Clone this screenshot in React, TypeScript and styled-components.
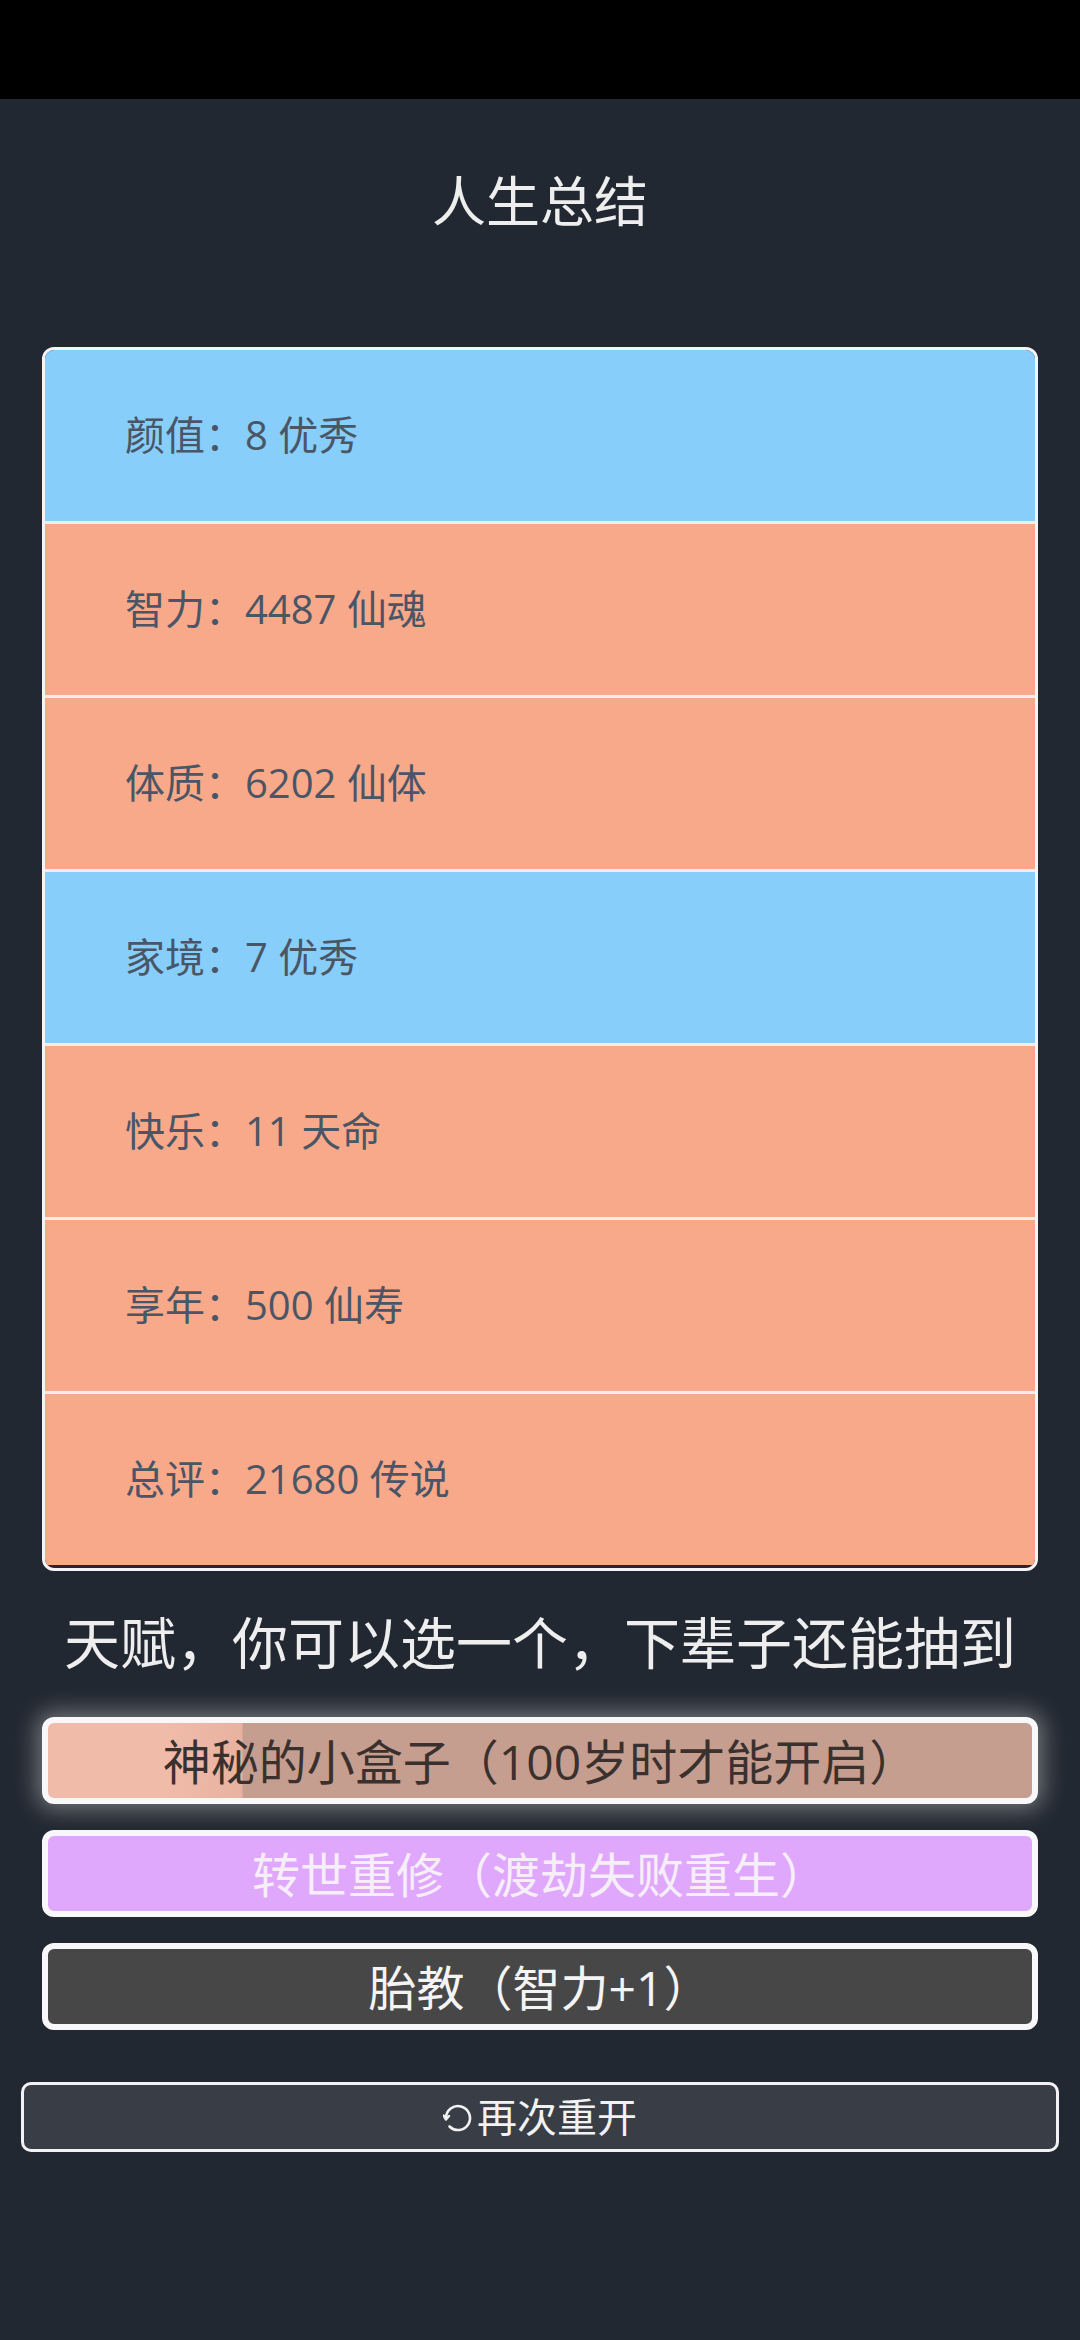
import { createGlobalStyle, styled } from 'styled-components';

const GlobalStyle = createGlobalStyle`
  html, body {
    margin: 0;
    padding: 0;
    background: #222831;
  }
  body {
    font-family: 'Open Sans', 'Noto Sans CJK SC', sans-serif;
  }
`;

interface Stat {
  label: string;
  value: string;
  tone: 'blue' | 'salmon';
}

const stats: Stat[] = [
  { label: '颜值', value: '8 优秀', tone: 'blue' },
  { label: '智力', value: '4487 仙魂', tone: 'salmon' },
  { label: '体质', value: '6202 仙体', tone: 'salmon' },
  { label: '家境', value: '7 优秀', tone: 'blue' },
  { label: '快乐', value: '11 天命', tone: 'salmon' },
  { label: '享年', value: '500 仙寿', tone: 'salmon' },
  { label: '总评', value: '21680 传说', tone: 'salmon' },
];

type Kind = 'selected' | 'purple' | 'gray';

const talents: { name: string; kind: Kind }[] = [
  { name: '神秘的小盒子（100岁时才能开启）', kind: 'selected' },
  { name: '转世重修（渡劫失败重生）', kind: 'purple' },
  { name: '胎教（智力+1）', kind: 'gray' },
];

const RestartIcon = () => (
  <svg width="30" height="30" viewBox="0 0 30 30" fill="none">
    <path
      d="M6.5 23.5 A12 12 0 1 0 3 15"
      stroke="#f2f2f2"
      strokeWidth="2.6"
      strokeLinecap="round"
    />
    <path d="M0.5 12.5 L3 16.5 L6 13" stroke="#f2f2f2" strokeWidth="2.4" strokeLinecap="round" strokeLinejoin="round" />
  </svg>
);

const App = () => {
  return (
    <Page>
      <GlobalStyle />
      <StatusBar />
      <Main>
        <Title>人生总结</Title>
        <StatList>
          {stats.map((s) => (
            <StatRow key={s.label} $tone={s.tone}>
              {s.label}：{s.value}
            </StatRow>
          ))}
        </StatList>
        <SubTitle>天赋，你可以选一个，下辈子还能抽到</SubTitle>
        <TalentList>
          {talents.map((t) => (
            <TalentButton key={t.name} $kind={t.kind}>
              {t.name}
            </TalentButton>
          ))}
        </TalentList>
        <RestartButton>
          <RestartIcon />
          再次重开
        </RestartButton>
      </Main>
    </Page>
  );
};

export default App;

const Page = styled.div`
  min-height: 2340px;
  background: #222831;
`;

const StatusBar = styled.div`
  height: 99px;
  background: #000;
`;

const Main = styled.div`
  display: flex;
  flex-direction: column;
  padding: 0 42px;
`;

const Title = styled.h1`
  margin: 62px 0 0;
  height: 76px;
  line-height: 76px;
  text-align: center;
  font-size: 54px;
  font-weight: 400;
  color: #eeeeee;
  font-family: 'Noto Sans CJK SC', sans-serif;
`;

const StatList = styled.div`
  display: flex;
  flex-direction: column;
  margin-top: 110px;
  border: 3px solid #f4f4f6;
  border-radius: 12px;
  overflow: hidden;
  background: #222831;
  padding-bottom: 3px;
`;

const StatRow = styled.div<{ $tone: 'blue' | 'salmon' }>`
  display: flex;
  align-items: center;
  box-sizing: border-box;
  height: 171px;
  padding: 0 0 6px 80px;
  font-size: 40px;
  color: #4a5566;
  background: ${({ $tone }) => ($tone === 'blue' ? '#87cefa' : '#f8a98a')};

  & + & {
    height: 174px;
    border-top: 3px solid #f3ece8;
  }
`;

const SubTitle = styled.h2`
  margin: 30px 0 0;
  height: 78px;
  line-height: 78px;
  text-align: center;
  font-size: 56px;
  font-weight: 400;
  color: #eeeeee;
  white-space: nowrap;
  font-family: 'Noto Sans CJK SC', sans-serif;
`;

const TalentList = styled.div`
  display: flex;
  flex-direction: column;
  gap: 26px;
  margin-top: 38px;
`;

const kindStyles: Record<Kind, string> = {
  selected: `
    background: linear-gradient(90deg, #f0bca9 0px, #f0bca9 120px, #e7b3a0 194px, #c59e90 195px, #c59e90 100%);
    color: #3a302d;
    box-shadow: 0 0 22px 6px rgba(255, 255, 255, 0.35);
  `,
  purple: `
    background: #e0a8fd;
    color: #f6eef9;
  `,
  gray: `
    background: #474747;
    color: #f4f4f4;
  `,
};

const TalentButton = styled.div<{ $kind: Kind }>`
  display: flex;
  align-items: center;
  justify-content: center;
  box-sizing: border-box;
  height: 87px;
  padding-bottom: 3px;
  border: 6px solid #f8f8fa;
  border-radius: 12px;
  font-size: 48px;
  ${({ $kind }) => kindStyles[$kind]}
`;

const RestartButton = styled.div`
  display: flex;
  align-items: center;
  justify-content: center;
  gap: 4px;
  box-sizing: border-box;
  height: 70px;
  margin: 52px -21px 0;
  padding-bottom: 5px;
  border: 3px solid #f2f2f4;
  border-radius: 10px;
  background: #393e46;
  color: #f2f2f2;
  font-size: 40px;
  font-family: 'Noto Sans CJK SC', sans-serif;

  svg {
    margin-top: 6px;
  }
`;
